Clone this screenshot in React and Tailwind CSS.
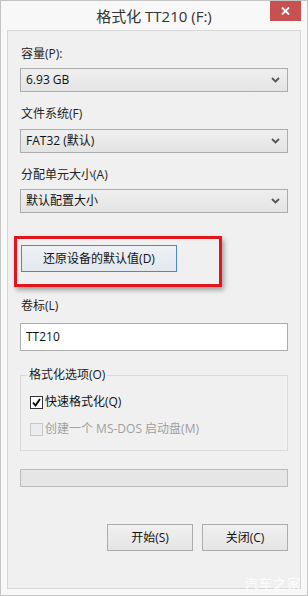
const FONT = { fontFamily: '"Open Sans", "Noto Sans CJK SC", sans-serif' };

function Chevron() {
  return (
    <svg width="9" height="6" viewBox="0 0 9 6" className="shrink-0">
      <polyline points="1,1 4.5,4.5 8,1" fill="none" stroke="#555" strokeWidth="1.8" />
    </svg>
  );
}

function Combo({ value }) {
  return (
    <div className="h-[24px] flex items-center justify-between pl-[5px] pr-[7px] border border-[#acacac] bg-gradient-to-b from-[#efefef] to-[#e4e4e4] text-[12px] text-[#111]">
      <span>{value}</span>
      <Chevron />
    </div>
  );
}

function Label({ children, className = '' }) {
  return <div className={`text-[12px] leading-[16px] text-[#222] pl-[1px] ${className}`}>{children}</div>;
}

function Button({ children, className = '' }) {
  return (
    <div className={`flex items-center justify-center border border-[#acacac] bg-gradient-to-b from-[#f0f0f0] to-[#e5e5e5] text-[12px] text-[#111] ${className}`}>
      {children}
    </div>
  );
}

export default function App() {
  return (
    <div style={FONT} className="relative w-[308px] h-[596px] bg-[#f8f8f8] border border-[#c4c4c4] flex flex-col overflow-hidden">
      {/* Title bar */}
      <div className="relative h-[29px] shrink-0 flex items-center justify-center">
        <span className="text-[15px] text-[#333] pt-[1px]">格式化 TT210 (F:)</span>
        <div className="absolute right-[6px] top-0 w-[31px] h-[20px] bg-[#c75050] flex items-center justify-center">
          <svg width="9" height="8" viewBox="0 0 9 8">
            <path d="M1 0.5 L8 7.5 M8 0.5 L1 7.5" stroke="#fff" strokeWidth="1.8" />
          </svg>
        </div>
      </div>

      {/* Content panel */}
      <div className="flex-1 mx-[6px] mb-[6px] border border-[#d6d6d6] bg-[#f0f0f0] px-[12px] pt-[15px] flex flex-col">
        <Label className="mb-[6px]">容量(P):</Label>
        <Combo value="6.93 GB" />

        <Label className="mt-[14px] mb-[7px]">文件系统(F)</Label>
        <Combo value="FAT32 (默认)" />

        <Label className="mt-[14px] mb-[6px]">分配单元大小(A)</Label>
        <Combo value="默认配置大小" />

        {/* highlighted restore button */}
        <div className="mt-[23px] -ml-[6px] w-[208px] h-[51px] border-[3px] border-[#e0161c] shadow-[2px_3px_5px_rgba(0,0,0,0.35)] pl-[4px] pt-[6px]">
          <div className="w-[156px] h-[27px] flex items-center justify-center border border-[#4a8ad0] bg-gradient-to-b from-[#eef2f6] to-[#e3e8ee] text-[12px] text-[#111]">
            还原设备的默认值(D)
          </div>
        </div>

        <Label className="mt-[11px] mb-[9px]">卷标(L)</Label>
        <div className="h-[28px] border border-[#acacac] bg-white flex items-center pl-[5px] text-[12px] text-[#111]">
          TT210
        </div>

        {/* Format options group */}
        <fieldset className="mt-[16px] h-[84px] border border-[#d9d9d9] px-[9px]">
          <legend className="-ml-[3px] px-[2px] text-[12px] leading-[16px] text-[#222]">格式化选项(O)</legend>
          <div className="flex items-center gap-[2px] mt-[12px] h-[14px]">
            <div className="w-[13px] h-[13px] border border-[#333] bg-white flex items-center justify-center">
              <svg width="9" height="9" viewBox="0 0 9 9">
                <polyline points="1,4.5 3.5,7.5 8,1" fill="none" stroke="#000" strokeWidth="1.8" />
              </svg>
            </div>
            <span className="text-[12px] text-[#111]">快速格式化(Q)</span>
          </div>
          <div className="flex items-center gap-[2px] mt-[13px] h-[14px]">
            <div className="w-[13px] h-[13px] border border-[#c8c8c8] bg-[#ececec]" />
            <span className="text-[12px] text-[#a0a0a0]">创建一个 MS-DOS 启动盘(M)</span>
          </div>
        </fieldset>

        {/* progress bar */}
        <div className="mt-[18px] h-[18px] border border-[#bcbcbc] bg-[#e6e6e6]" />

        <div className="mt-[37px] flex justify-end gap-[9px]">
          <Button className="w-[86px] h-[27px]">开始(S)</Button>
          <Button className="w-[86px] h-[27px]">关闭(C)</Button>
        </div>
      </div>

      <span className="absolute right-[6px] bottom-[2px] text-[13px] tracking-[1px] text-white/80">汽车之家</span>
    </div>
  );
}
